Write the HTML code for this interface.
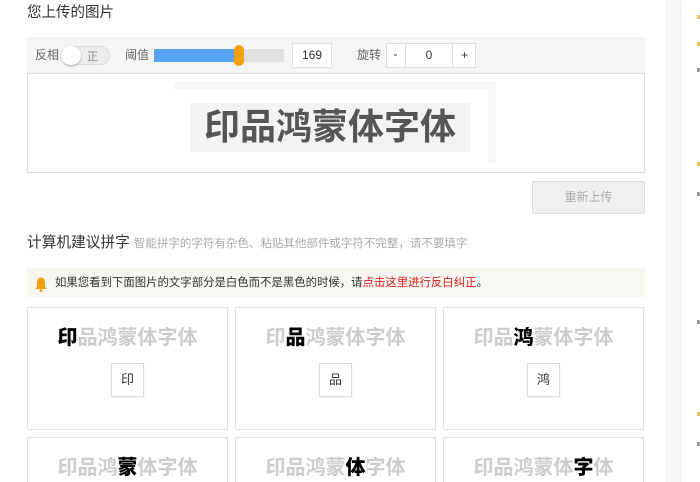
<!DOCTYPE html>
<html><head><meta charset="utf-8"><style>
*{margin:0;padding:0;box-sizing:border-box}
html,body{width:700px;height:482px;overflow:hidden}
body{background:#fff;font-family:"Liberation Sans","Noto Sans CJK SC",sans-serif;position:relative;color:#333}
.a{position:absolute;white-space:nowrap}
.card{position:absolute;border:1px solid #e3e3e3;background:#fff;width:201px;height:123px}
.card.s{height:45px;border-bottom:none;overflow:hidden}
.ct{position:absolute;left:0;right:0;top:18px;text-align:center;font-size:20px;font-weight:bold;color:#ccc;line-height:24px}
.ct b{color:#000}
.cb{position:absolute;left:83px;top:55px;width:33px;height:34px;border:1px solid #ddd;text-align:center;line-height:32px;font-size:13px;color:#333;box-shadow:0 1px 2px rgba(0,0,0,.08)}
.m{position:absolute;left:697px;width:3px;height:4px;background:#999}
</style></head><body>
<div class="a" style="left:666px;top:0;width:16px;height:482px;background:#f4f4f4"></div>
<div class="m" style="top:15px;background:#f0c060"></div>
<div class="m" style="top:42px;background:#f0c060"></div>
<div class="m" style="top:68px"></div>
<div class="m" style="top:162px;background:#f0c060"></div>
<div class="m" style="top:192px"></div>
<div class="m" style="top:320px"></div>
<div class="m" style="top:412px;background:#f0c060"></div>
<div class="m" style="top:442px"></div>

<div class="a" style="left:27px;top:3px;font-size:14.5px;line-height:20px;color:#333">您上传的图片</div>

<div class="a" style="left:27px;top:37px;width:618px;height:36px;background:#f5f5f5"></div>
<div class="a" style="left:35px;top:47px;font-size:12px;color:#666;line-height:16px">反相</div>
<div class="a" style="left:61px;top:46px;width:49px;height:19px;border-radius:10px;background:#ececec;border:1px solid #ddd"></div>
<div class="a" style="left:61px;top:46px;width:20px;height:19px;border-radius:10px;background:#fff;box-shadow:0 1px 2px rgba(0,0,0,.3)"></div>
<div class="a" style="left:87px;top:48px;font-size:11px;color:#888">正</div>
<div class="a" style="left:125px;top:47px;font-size:12px;color:#666;line-height:16px">阈值</div>
<div class="a" style="left:154px;top:49px;width:130px;height:13px;background:#e0e0e0"></div>
<div class="a" style="left:154px;top:49px;width:85px;height:13px;background:#5aa3f0"></div>
<div class="a" style="left:234px;top:45px;width:10px;height:21px;border-radius:5px;background:#f2a00c"></div>
<div class="a" style="left:292px;top:43px;width:40px;height:25px;background:#fff;border:1px solid #e0e0e0;text-align:center;line-height:23px;font-size:12px;color:#333">169</div>
<div class="a" style="left:357px;top:47px;font-size:12px;color:#666;line-height:16px">旋转</div>
<div class="a" style="left:386px;top:43px;width:90px;height:25px;background:#fff;border:1px solid #ddd"></div>
<div class="a" style="left:386px;top:43px;width:20px;height:25px;border-right:1px solid #ddd;text-align:center;line-height:23px;font-size:12px">-</div>
<div class="a" style="left:406px;top:43px;width:46px;height:25px;text-align:center;line-height:25px;font-size:12px">0</div>
<div class="a" style="left:452px;top:43px;width:24px;height:25px;border-left:1px solid #ddd;text-align:center;line-height:25px;font-size:12px">+</div>

<div class="a" style="left:27px;top:73px;width:618px;height:100px;border:1px solid #ddd;background:#fff"></div>
<div class="a" style="left:174px;top:82px;width:322px;height:81px;background:#f6f6f6"></div>
<div class="a" style="left:174px;top:89px;width:314px;height:74px;background:#fff"></div>
<div class="a" style="left:190px;top:103px;width:280px;height:49px;background:#f3f3f5"></div>
<div class="a" style="left:204px;top:105px;font-size:36px;font-weight:bold;color:#555;line-height:44px">印品鸿蒙体字体</div>

<div class="a" style="left:532px;top:181px;width:113px;height:33px;background:#f0f0f0;border:1px solid #ddd;border-radius:2px;text-align:center;line-height:31px;font-size:12px;color:#aaa">重新上传</div>

<div class="a" style="left:27px;top:233px;font-size:14.7px;line-height:20px;color:#333">计算机建议拼字 <span style="font-size:11.5px;color:#aaa">智能拼字的字符有杂色、粘贴其他部件或字符不完整，请不要填字</span></div>

<div class="a" style="left:27px;top:268px;width:618px;height:29px;background:#f7f6f1"></div>
<svg class="a" style="left:34px;top:276px" width="14" height="16" viewBox="0 0 14 16"><path d="M7 1.5C4 1.5 3 4 3 7v4l-2 2h12l-2-2V7c0-3-1-5.5-4-5.5z" fill="#f2a00c"/><circle cx="7" cy="14.5" r="1.5" fill="#f2a00c"/></svg>
<div class="a" style="left:55px;top:275px;font-size:11.4px;line-height:16px;color:#333">如果您看到下面图片的文字部分是白色而不是黑色的时候，请<span style="color:#e02020">点击这里进行反白纠正</span>。</div>

<div class="card" style="left:27px;top:307px"><div class="ct"><b>印</b>品鸿蒙体字体</div><div class="cb">印</div></div>
<div class="card" style="left:235px;top:307px"><div class="ct">印<b>品</b>鸿蒙体字体</div><div class="cb">品</div></div>
<div class="card" style="left:443px;top:307px"><div class="ct">印品<b>鸿</b>蒙体字体</div><div class="cb">鸿</div></div>
<div class="card s" style="left:27px;top:437px"><div class="ct">印品鸿<b>蒙</b>体字体</div></div>
<div class="card s" style="left:235px;top:437px"><div class="ct">印品鸿蒙<b>体</b>字体</div></div>
<div class="card s" style="left:443px;top:437px"><div class="ct">印品鸿蒙体<b>字</b>体</div></div>
</body></html>
